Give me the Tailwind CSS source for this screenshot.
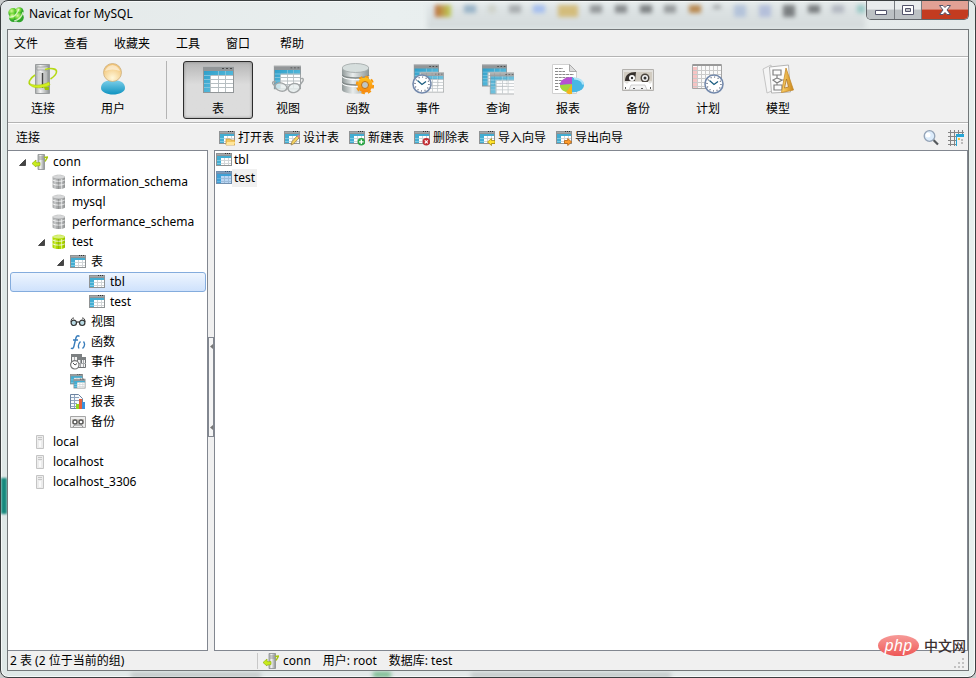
<!DOCTYPE html>
<html lang="zh-CN">
<head>
  <meta charset="UTF-8" />
  <meta name="viewport" content="width=device-width, initial-scale=1.0" />
  <title>Navicat for MySQL</title>
  <script src="https://cdn.jsdelivr.net/npm/@tailwindcss/browser@4"></script>
</head>
<body class="h-screen overflow-hidden bg-[#c9cccc] font-['Noto_Sans','Noto_Sans_CJK_SC',sans-serif] text-xs text-black">

  <!-- Icon definitions -->
  <svg width="0" height="0" class="absolute" aria-hidden="true">
    <defs>
      <linearGradient id="g-metal" x1="0" x2="1"><stop offset="0" stop-color="#a4a8a8" /><stop offset=".35" stop-color="#f4f4f4" /><stop offset="1" stop-color="#8b9090" /></linearGradient>
      <linearGradient id="g-drum" x1="0" x2="1"><stop offset="0" stop-color="#8f9898" /><stop offset=".4" stop-color="#e9eded" /><stop offset="1" stop-color="#8b9595" /></linearGradient>
      <linearGradient id="g-blue" x1="0" x2="1" y2="1"><stop offset="0" stop-color="#2f9fc9" /><stop offset="1" stop-color="#6cc9e6" /></linearGradient>
      <linearGradient id="g-body" x1="0" x2="0" y1="0" y2="1"><stop offset="0" stop-color="#7fd0ea" /><stop offset="1" stop-color="#0f93c0" /></linearGradient>
      <radialGradient id="g-head" cx=".5" cy=".8" r=".7"><stop offset="0" stop-color="#fff7da" /><stop offset="1" stop-color="#f2c578" /></radialGradient>
      <radialGradient id="g-ball" cx=".35" cy=".3"><stop offset="0" stop-color="#d8f79a" /><stop offset=".6" stop-color="#6fd636" /><stop offset="1" stop-color="#2fa62a" /></radialGradient>
      <linearGradient id="g-gold" x1="0" x2="1"><stop offset="0" stop-color="#ffd56b" /><stop offset="1" stop-color="#c9851a" /></linearGradient>
      <linearGradient id="g-gear" x1="0" x2="0" y1="0" y2="1"><stop offset="0" stop-color="#ffc21c" /><stop offset="1" stop-color="#f7850f" /></linearGradient>

      <symbol id="i-table" viewBox="0 0 16 16">
        <path d="M0 1h16v13H0z" fill="#8f9395" />
        <path d="M1 2h14v1H1z" fill="#a3a7a9" />
        <path d="M9 1h1v1H9zM11 1h1v1h-1zM13 1h1v1h-1z" fill="#333" />
        <path d="M1 4h14v2H1zM1 6h4v7H1z" fill="#43add2" />
        <path d="M1 8h4v1H1zM1 11h4v1H1z" fill="#7cc9e2" />
        <path d="M5 6h10v7H5z" fill="#fff" />
        <path d="M5 8h10v1H5zM5 11h10v1H5zM8 6h1v7H8zM12 6h1v7h-1z" fill="#d2d6d8" />
      </symbol>

      <symbol id="i-table-lg" viewBox="0 0 32 32">
        <path d="M1 3h31v27H1z" fill="#929698" />
        <path d="M1 3h31v1H1z" fill="#b5b8b9" />
        <path d="M20 5h2v1h-2zM24 5h2v1h-2zM28 5h2v1h-2z" fill="#4b4b4b" />
        <path d="M2 8h29v5H2zM2 13h7v16H2z" fill="url(#g-blue)" />
        <path d="M9 13h22v16H9z" fill="#fff" />
        <path d="M2 12h7v1H2zM2 16h7v1H2zM2 20h7v1H2zM2 24h7v1H2zM16 8h1v5h-1zM23 8h1v5h-1z" fill="#7fc2dc" />
        <path d="M9 12h22v1H9zM9 16h22v1H9zM9 20h22v1H9zM9 24h22v1H9zM8 13h1v16H8zM16 13h1v16h-1zM23 13h1v16h-1z" fill="#b7bfc2" />
      </symbol>

      <symbol id="i-server" viewBox="0 0 16 16">
        <path d="M6 .5h6.500v15H6z" fill="url(#g-metal)" stroke="#8c8f90" stroke-width=".8" />
        <path d="M7 3h4.500M7 5h4.500" stroke="#888" stroke-width=".8" />
        <path d="M12 3.500l3.500-.5-2.500 4.500" fill="none" stroke="#a7c510" stroke-width="1.500" />
        <path d="M0 9.500l4-3.500v2.500c2 .5 3 0 4 0v3c-2 .5-3 .5-4 .3V13z" fill="#c9ec1c" stroke="#94b30a" stroke-width=".7" />
      </symbol>

      <symbol id="i-server-off" viewBox="0 0 16 16">
        <path d="M4.500 1.500h7v13h-7z" fill="#ececec" stroke="#c4c4c4" />
        <path d="M6 3.500h4M6 5.500h4" stroke="#c6c6c6" />
        <path d="M8 7v6" stroke="#fafafa" stroke-width="2" />
      </symbol>

      <symbol id="i-db" viewBox="0 0 16 16">
        <path d="M1.500 2.500C4 .3 12 .3 14 2.500v11c-2 2-10 2-12.500 0z" fill="currentColor" />
        <ellipse cx="7.800" cy="2.800" rx="6" ry="1.700" fill="#fff" fill-opacity=".5" />
        <path d="M1.500 6c3 1.800 9.500 1.800 12.500 0M1.500 9.800c3 1.800 9.500 1.800 12.500 0" fill="none" stroke="#fff" stroke-opacity=".8" />
        <path d="M4 5v10M10.500 5v10" stroke="#fff" stroke-opacity=".5" />
        <path d="M7.500 5v10M13.200 4v10" stroke="#000" stroke-opacity=".15" stroke-width="1.500" />
      </symbol>

      <symbol id="i-arrow" viewBox="0 0 7 7"><path d="M6.500 .5v6h-6z" fill="#444" stroke="#222" stroke-width=".7" /></symbol>

      <symbol id="i-clock" viewBox="0 0 20 20">
        <circle cx="10" cy="10" r="9" fill="#fff" stroke="#7389ac" stroke-width="1.600" />
        <circle cx="10" cy="10" r="7" fill="none" stroke="#49536a" stroke-width="1.200" stroke-dasharray="1 2.660" />
        <path d="M5.500 6.500L10 10.500l4-3" fill="none" stroke="#1b5d80" stroke-width="1.300" />
      </symbol>

      <symbol id="i-cassette" viewBox="0 0 32 32">
        <path d="M.5 6.500h31v21H.5z" fill="#e3e1dd" stroke="#b3b1ae" />
        <path d="M2 9h28v9H2z" fill="#d2ccc1" />
        <path d="M3 18c0-6 4-9 11-9l-1 9z" fill="#37322e" />
        <circle cx="23" cy="15" r="4.500" fill="#4a443d" />
        <circle cx="10" cy="15" r="3" fill="#fff" /><circle cx="23" cy="15" r="3" fill="#f3f3f3" />
        <circle cx="10" cy="15" r="1.200" fill="#333" /><circle cx="23" cy="15" r="1.500" fill="#333" />
        <path d="M2 19l3 2 2-2h19l2 2 2-2v7H2z" fill="#fff" />
        <path d="M7 27l2-5h14l2 5z" fill="#f4f4f4" stroke="#bbb" stroke-width=".7" />
        <path d="M11 25h2v1h-2zM19 25h2v1h-2zM3 24h1v2H3zM28 24h1v2h-1z" fill="#555" />
      </symbol>
    </defs>
  </svg>

  <div class="relative flex h-full flex-col overflow-hidden rounded-lg border border-[#3b3f40] bg-linear-to-r from-[#dfe8e7] via-[#e3e9e9] to-[#e6efed] px-[6px] pb-[6px] shadow-[inset_0_0_0_1px_#ffffffb0]">

    <!-- Glass reflections showing through the frame -->
    <div class="pointer-events-none absolute inset-0 overflow-hidden" aria-hidden="true">
      <div class="absolute inset-x-0 top-px h-7 bg-linear-to-r from-[#e4e9e9] via-[#e9efef] via-40% to-[#e4eaea]"></div>
      <div class="absolute top-1 right-[110px] left-[426px] h-6 bg-linear-to-b from-[#dfe5e6] to-[#d3dadb] blur-[2px]"></div>
      <div class="absolute top-1 right-[110px] left-[434px] flex items-start justify-between blur-[2px]">
        <span class="h-3 w-4 bg-linear-to-r from-[#bb6a3c] to-[#b9cf57]"></span><span class="h-2 w-3 bg-[#9ab4c8]"></span><span class="h-2 w-2 bg-[#cfd3cb]"></span><span class="h-2 w-3 bg-[#a9aeb0]"></span><span class="h-2 w-3 bg-[#a6bfee]"></span><span class="h-3 w-5 bg-[#d3bc7c]"></span><span class="h-2 w-3 bg-[#95999b]"></span><span class="h-2 w-3 bg-[#8a8e90]"></span><span class="h-2 w-3 bg-[#7f8385]"></span><span class="h-2 w-3 bg-[#989c9e]"></span><span class="h-2 w-3 bg-[#b98a52]"></span><span class="h-1 w-2 bg-[#a5a9ab]"></span><span class="h-3 w-3 bg-[#b4c3da]"></span><span class="h-3 w-3 bg-[#b4bfda]"></span><span class="h-3 w-3 bg-[#7b7f81]"></span><span class="h-2 w-3 bg-[#7b7f81]"></span><span class="h-2 w-3 bg-[#b4b9c2]"></span><span class="h-2 w-2 bg-[#9ac9c6]"></span>
      </div>
      <div class="absolute top-[477px] left-0 h-9 w-[6px] bg-[#17897d] blur-[1px]"></div>
      <div class="absolute bottom-0 left-[372px] h-[5px] w-[18px] bg-[#6cb585] blur-[2px]"></div>
      <div class="absolute bottom-0 left-[130px] h-1 w-[130px] bg-[#b9c0c0] blur-[2px]"></div>
      <div class="absolute bottom-0 left-[470px] h-1 w-[200px] bg-[#b9c0c0] blur-[2px]"></div>
    </div>

    <header class="relative flex h-7 shrink-0 items-start">
      <svg class="mt-[6px] ml-px size-4" viewBox="0 0 16 16" aria-hidden="true">
        <circle cx="5" cy="5.800" r="4.700" fill="url(#g-ball)" /><circle cx="11.300" cy="4.500" r="4.300" fill="url(#g-ball)" /><circle cx="5.500" cy="10.500" r="4.500" fill="url(#g-ball)" /><circle cx="11" cy="10.500" r="4.800" fill="url(#g-ball)" />
        <path d="M1 10c5 1 8-3 10-8M6 14c5-1 8-5 9-9" fill="none" stroke="#f0fbe0" stroke-opacity=".8" stroke-width="1.200" />
      </svg>
      <h1 class="ml-[5px] pt-[3px] text-xs leading-5">Navicat for MySQL</h1>
      <div class="ml-auto flex h-[19px] overflow-hidden rounded-b-[5px] border border-t-0 border-[#62666a]">
        <button class="flex w-[28px] items-center justify-center border-r border-[#777b80] bg-linear-to-b from-[#e9eced] from-45% to-[#bcc1c4] to-50%" aria-label="最小化">
          <svg class="mt-1 h-[5px] w-3" viewBox="0 0 12 5"><path d="M.5.500h11v4H.5z" fill="#fff" stroke="#53546a" /></svg>
        </button>
        <button class="flex w-[27px] items-center justify-center border-r border-[#777b80] bg-linear-to-b from-[#e9eced] from-45% to-[#bcc1c4] to-50%" aria-label="最大化">
          <svg class="h-[10px] w-3" viewBox="0 0 12 10"><path d="M.5.500h11v9H.5z" fill="#fff" stroke="#53546a" /><path d="M3.500 3.500h5v3h-5z" fill="#c2c5c9" stroke="#53546a" /></svg>
        </button>
        <button class="flex w-[46px] items-center justify-center bg-linear-to-b from-[#e2a195] from-45% to-[#c33b20] to-50%" aria-label="关闭">
          <svg class="h-[10px] w-3" viewBox="0 0 12 10"><path d="M.5.500h3.500l2 2 2-2h3.500L8 5l3.500 4.500H8l-2-2-2 2H.5L4 5z" fill="#fff" stroke="#53546a" /></svg>
        </button>
      </div>
    </header>

    <div class="relative flex min-h-0 flex-1 flex-col border border-[#73787a] bg-[#f0f0f0]">
      <nav class="flex h-[27px] shrink-0 items-center gap-[26px] border-b border-[#b4b4b4] pt-[2px] pl-[6px]">
        <button>文件</button>
        <button>查看</button>
        <button>收藏夹</button>
        <button>工具</button>
        <button>窗口</button>
        <button class="pl-1">帮助</button>
      </nav>

      <!-- Main toolbar -->
      <div class="flex h-[66px] shrink-0 items-center border-t border-b border-t-white border-b-[#b4b4b4]">
        <button class="flex h-[58px] w-[70px] flex-col items-center gap-[5px] pt-[2px] leading-[18px]">
          <svg class="size-8" viewBox="0 0 32 32">
            <path d="M8.500 1.500h14v29h-14z" fill="url(#g-metal)" stroke="#9a9d9e" /><path d="M10 4h11v3H10z" fill="#ddd" stroke="#8b8e8f" stroke-width=".6" /><path d="M15.500 10v15" stroke="#444" stroke-width="1.500" /><path d="M13 9v17h6V9" fill="none" stroke="#c7c7c7" />
            <path d="M18 6.500c7-2 12-.5 11.500 2.500-.3 3-3 5-6 7M8 12c-6 4-7 8-4.500 10" fill="none" stroke="#b5d916" stroke-width="1.600" /><path d="M2 20c3 3 13 3 20-1l1 3c-5 3-19 5-21-2z" fill="#d3f01f" stroke="#a8cb0d" stroke-width=".6" /><path d="M17 24h5v3h-4z" fill="#9cc30b" />
          </svg>连接
        </button>
        <button class="flex h-[58px] w-[70px] flex-col items-center gap-[5px] pt-[2px] leading-[18px]">
          <svg class="size-8" viewBox="0 0 32 32"><path d="M4 25c0-6 6-8 12-8s12 2 12 8c0 4-6 6.500-12 6.500S4 29 4 25z" fill="url(#g-body)" /><circle cx="15.500" cy="9.500" r="9" fill="url(#g-head)" stroke="#cdae7c" stroke-width=".8" /><path d="M8 8c3-8 12-8 15 0-5-2-10-2-15 0z" fill="#fff" fill-opacity=".5" /></svg>用户
        </button>
        <div class="mr-4 ml-[18px] h-[58px] w-px bg-[#b4b4b4]"></div>
        <button class="flex h-[58px] w-[70px] flex-col items-center gap-[5px] rounded-[3px] border border-[#2c2c2c] bg-linear-to-b from-[#b5b5b5] to-[#dcdcdc] to-40% pt-px leading-[18px] shadow-[inset_0_0_3px_#8a8a8a]">
          <svg class="size-8"><use href="#i-table-lg" /></svg>表
        </button>
        <button class="flex h-[58px] w-[70px] flex-col items-center gap-[5px] pt-[2px] leading-[18px]">
          <svg class="size-8" viewBox="0 0 32 32"><use href="#i-table-lg" x="1" y="0" width="28" height="28" /><ellipse cx="9" cy="24" rx="6" ry="4" fill="#e6eeee" fill-opacity=".8" stroke="#a2a6a7" stroke-width="1.400" transform="rotate(15 9 24)" /><ellipse cx="22" cy="25" rx="6" ry="4.500" fill="#e6eeee" fill-opacity=".8" stroke="#a2a6a7" stroke-width="1.400" transform="rotate(-15 22 25)" /><path d="M3 23c-4-3-3-5 1-4M28 22l3-4c1-3-1-3-3-2" fill="none" stroke="#a2a6a7" stroke-width="1.400" /></svg>视图
        </button>
        <button class="flex h-[58px] w-[70px] flex-col items-center gap-[5px] pt-[2px] leading-[18px]">
          <svg class="size-8" viewBox="0 0 32 32"><path d="M0 5v22c2 5 24 5 27 0V5z" fill="url(#g-drum)" /><path d="M0 12c3 4 24 4 27 0M0 19c3 4 24 4 27 0" fill="none" stroke="#838a8a" stroke-width="1.300" /><path d="M0 13.500c3 4 24 4 27 0M0 20.500c3 4 24 4 27 0" fill="none" stroke="#fff" /><ellipse cx="13.500" cy="5" rx="13.300" ry="4.500" fill="#d6dedd" stroke="#9fa6a6" stroke-width=".8" /><circle cx="23" cy="22" r="8.200" fill="none" stroke="#f7980f" stroke-width="2" stroke-dasharray="3.500 2.940" /><circle cx="23" cy="22" r="7.500" fill="url(#g-gear)" /><circle cx="23" cy="22" r="3.500" fill="#bfc7c5" stroke="#c8700a" /></svg>函数
        </button>
        <button class="flex h-[58px] w-[70px] flex-col items-center gap-[5px] pt-[2px] leading-[18px]">
          <svg class="size-8" viewBox="0 0 32 32"><use href="#i-table-lg" x="1" y="-1" width="26" height="26" /><use href="#i-table-lg" x="8" y="6" width="24" height="26" opacity=".8" /><use href="#i-clock" x="0" y="11" width="20" height="20" /></svg>事件
        </button>
        <button class="flex h-[58px] w-[70px] flex-col items-center gap-[5px] pt-[2px] leading-[18px]">
          <svg class="size-8" viewBox="0 0 32 32"><use href="#i-table-lg" x="-1" y="-1" width="26" height="26" /><use href="#i-table-lg" x="7" y="7" width="26" height="26" opacity=".8" /></svg>查询
        </button>
        <button class="flex h-[58px] w-[70px] flex-col items-center gap-[5px] pt-[2px] leading-[18px]">
          <svg class="size-8" viewBox="0 0 32 32"><path d="M.5 1.500h17l7 7v22H.5z" fill="#fff" stroke="#d0d0d0" /><path d="M17.500 1.500v7h7z" fill="#ddd" stroke="#aaa" /><path d="M3 5.500h8M3 8.500h10M3 11.500h19M3 14.500h18M3 17.500h12M3 20.500h6M3 23.500h4M3 26.500h4" stroke="#8a8a8a" stroke-dasharray="3 .7" /><ellipse cx="20" cy="22" rx="12" ry="7.500" fill="#49b7e4" /><path d="M20 21V14c-7 0-12 3-12 8z" fill="#b84fd0" /><path d="M20 21L8 22c0 4 3 6 6 7z" fill="#a4d838" /><path d="M20 21l-6 8c2 3 4 2 6 2z" fill="#f5b51b" /><path d="M22 15.500c6 0 9 3 9 6" fill="none" stroke="#b3e5f8" stroke-width="2" /></svg>报表
        </button>
        <button class="flex h-[58px] w-[70px] flex-col items-center gap-[5px] pt-[2px] leading-[18px]">
          <svg class="size-8"><use href="#i-cassette" /></svg>备份
        </button>
        <button class="flex h-[58px] w-[70px] flex-col items-center gap-[5px] pt-[2px] leading-[18px]">
          <svg class="size-8" viewBox="0 0 32 32"><path d="M.5 1.500h29v24H.5z" fill="#fafafa" stroke="#a5a5a5" /><path d="M1 1h28v2H1z" fill="#999" /><path d="M1 4h4v21H1z" fill="#f6c3c3" /><path d="M1 7.500h28M1 11.500h28M1 15.500h28M1 19.500h28M1 23.500h28M5.500 3v22M9.500 3v22M13.500 3v22M17.500 3v22M21.500 3v22M25.500 3v22" stroke="#cacaca" /><use href="#i-clock" x="12" y="11" width="20" height="20" /></svg>计划
        </button>
        <button class="flex h-[58px] w-[70px] flex-col items-center gap-[5px] pt-[2px] leading-[18px]">
          <svg class="size-8" viewBox="0 0 32 32"><path d="M1 6l8-4 3 25-7 3z" fill="#f5f5f5" stroke="#c5c5c5" /><path d="M7.500 4l19-2 2 27-19 1z" fill="#fbfbfb" stroke="#b5b5b5" /><path d="M11 7h8v5h-8zM12 22h8v5h-8zM15 12v3l-4 2 4 3 5-3-5-2M15 20v2M20 17h5" fill="none" stroke="#808080" stroke-width="1.200" /><path d="M24 5l7.500 22-12 2.500z" fill="url(#g-gold)" stroke="#c58a2c" stroke-width=".8" /><path d="M24.500 16l2 8-4 1z" fill="#f3eadb" stroke="#a66f20" stroke-width=".7" /></svg>模型
        </button>
      </div>

      <!-- Object toolbar -->
      <div class="flex h-[27px] shrink-0 items-center border-t border-white pt-px pr-1">
        <h2 class="w-[211px] shrink-0 pl-2">连接</h2>
        <div class="flex flex-1 gap-[10px]">
          <button class="flex items-center gap-[3px]">
            <svg class="size-4" viewBox="0 0 16 16"><use href="#i-table" width="16" height="16" /><path d="M7 9h4l1 1h4v5H7z" fill="#f3c75f" stroke="#c5963a" stroke-width=".7" /><path d="M8 12h8l-1 3H7z" fill="#ffe69b" /></svg>打开表
          </button>
          <button class="flex items-center gap-[3px]">
            <svg class="size-4" viewBox="0 0 16 16"><use href="#i-table" width="16" height="16" /><path d="M7 15l1-3.500L13 6l2 2-5.500 6z" fill="#f5d25e" stroke="#8d7440" stroke-width=".7" /><path d="M13 6l1.200-1.200 1.800 1.800L15 8z" fill="#e5838a" /></svg>设计表
          </button>
          <button class="flex items-center gap-[3px]">
            <svg class="size-4" viewBox="0 0 16 16"><use href="#i-table" width="16" height="16" /><circle cx="12.300" cy="11.800" r="3.700" fill="#2aa645" /><path d="M12.300 9.500v4.600M10 11.800h4.600" stroke="#fff" stroke-width="1.300" /></svg>新建表
          </button>
          <button class="flex items-center gap-[3px]">
            <svg class="size-4" viewBox="0 0 16 16"><use href="#i-table" width="16" height="16" /><circle cx="12.300" cy="11.800" r="3.700" fill="#c22c32" /><path d="M10.800 10.300l3 3M13.800 10.300l-3 3" stroke="#fff" stroke-width="1.200" /></svg>删除表
          </button>
          <button class="flex items-center gap-[3px]">
            <svg class="size-4" viewBox="0 0 16 16"><use href="#i-table" width="16" height="16" /><path d="M8.500 12l4-3.500v2H16v3h-3.500v2z" fill="#ffe32c" stroke="#a68a10" stroke-width=".8" /></svg>导入向导
          </button>
          <button class="flex items-center gap-[3px]">
            <svg class="size-4" viewBox="0 0 16 16"><use href="#i-table" width="16" height="16" /><path d="M15.700 12l-4-3.500v2H8.500v3h3.200v2z" fill="#ff9c2a" stroke="#b3600c" stroke-width=".8" /></svg>导出向导
          </button>
        </div>
        <button class="mr-[9px]" aria-label="搜索">
          <svg class="size-4" viewBox="0 0 16 16"><path d="M10.500 10l4.500 4.500" stroke="#55595c" stroke-width="2.200" /><circle cx="6.500" cy="6" r="5.300" fill="#dcecfb" stroke="#94a3b6" stroke-width="1.300" /><circle cx="5" cy="5" r="2.500" fill="#fff" /></svg>
        </button>
        <button aria-label="布局">
          <svg class="size-4" viewBox="0 0 16 16"><path d="M0 2.500h16M0 6.500h16M0 10.500h8M0 14.500h8M2.500 0v16M6.500 0v16M10.500 0v5M14.500 0v5" stroke="#858585" /><path d="M8 5h8v11H8z" fill="#f0f0f0" /><path d="M8 4h8v3H8zM8 4h1v12H8z" fill="#24a6d6" /><path d="M10 8h2v2h-2z" fill="#f0c23d" /><path d="M13 9h2v2h-2zM13 12h2v2h-2z" fill="#bbb" /></svg>
        </button>
      </div>

      <div class="flex min-h-0 flex-1">
        <!-- Connection tree -->
        <aside class="w-[200px] shrink-0 border border-l-0 border-[#828790] bg-white pt-px pr-px pl-[2px]">
          <ul>
            <li class="flex h-5 items-center gap-[6px] pl-[9px]"><svg class="size-[7px]"><use href="#i-arrow" /></svg><svg class="-mr-px size-4"><use href="#i-server" /></svg>conn</li>
            <li class="flex h-5 items-center gap-[5px] pl-[41px]"><svg class="size-4 text-[#adafb0]"><use href="#i-db" /></svg>information_schema</li>
            <li class="flex h-5 items-center gap-[5px] pl-[41px]"><svg class="size-4 text-[#adafb0]"><use href="#i-db" /></svg>mysql</li>
            <li class="flex h-5 items-center gap-[5px] pl-[41px]"><svg class="size-4 text-[#adafb0]"><use href="#i-db" /></svg>performance_schema</li>
            <li class="flex h-5 items-center gap-[6px] pl-7"><svg class="size-[7px]"><use href="#i-arrow" /></svg><svg class="-mr-px size-4 text-[#b0dc00]"><use href="#i-db" /></svg>test</li>
            <li class="flex h-5 items-center gap-[6px] pl-[47px]"><svg class="size-[7px]"><use href="#i-arrow" /></svg><svg class="-mr-px size-4"><use href="#i-table" /></svg>表</li>
            <li class="flex h-5 items-center gap-[5px] rounded-[3px] border border-[#84acdd] bg-linear-to-b from-[#eef5fe] to-[#cfe2fc] pl-[78px]"><svg class="size-4"><use href="#i-table" /></svg>tbl</li>
            <li class="flex h-5 items-center gap-[5px] pl-[79px]"><svg class="size-4"><use href="#i-table" /></svg>test</li>
            <li class="flex h-5 items-center gap-[5px] pl-[60px]">
              <svg class="size-4" viewBox="0 0 16 16"><path d="M1 8c0-3 1-4 3-4M15 8c0-3-1-4-3-4" fill="none" stroke="#444" /><circle cx="3.800" cy="8.800" r="2.700" fill="#b9dbe5" stroke="#333" stroke-width="1.200" /><circle cx="12.200" cy="8.800" r="2.700" fill="#b9dbe5" stroke="#333" stroke-width="1.200" /><path d="M6.500 8h3" stroke="#333" stroke-width="1.200" /></svg>视图
            </li>
            <li class="flex h-5 items-center gap-[5px] pl-[60px]">
              <svg class="size-4" viewBox="0 0 16 16" fill="none" stroke="#397dbb"><path d="M9.500 2.500c-2-2-3.500 0-4 3L4 12c-.5 2.500-2 3-3 2M3 6h5" stroke-width="1.400" /><path d="M10.500 7.500c-2 2-2.500 5-1.500 7M13.500 7.500c1.500 2 1 5-1 7" stroke-width="1.300" /></svg>函数
            </li>
            <li class="flex h-5 items-center gap-[5px] pl-[60px]">
              <svg class="size-4" viewBox="0 0 16 16"><path d="M1.500.500h10v9h-10zM7.500 3.500h8v10h-8z" fill="#f3f3f3" stroke="#707476" /><path d="M1 0h11v3H1zM7 3h9v3H7z" fill="#7c8082" /><path d="M4.500 3v4M10.500 6v7M13.500 6v7M8 9.500h8" stroke="#a5a8aa" /><circle cx="4.800" cy="10.800" r="4.200" fill="#fff" stroke="#777" stroke-width="1.200" /><path d="M3 9l2 2 2-1.500" fill="none" stroke="#555" /></svg>事件
            </li>
            <li class="flex h-5 items-center gap-[5px] pl-[60px]">
              <svg class="size-4" viewBox="0 0 16 16"><use href="#i-table" y="-1" width="13" height="13" /><use href="#i-table" x="3" y="4" width="13" height="12" /></svg>查询
            </li>
            <li class="flex h-5 items-center gap-[5px] pl-[60px]">
              <svg class="size-4" viewBox="0 0 16 16"><path d="M.5.500h8l4 4v10H.5z" fill="#f5f9fd" stroke="#6c83a0" /><path d="M1 3.500h8M1 6.500h11M1 9.500h6M1 12.500h5M4.500 1v13" stroke="#8fa3bd" /><path d="M6 10h3v5H6z" fill="#92d51e" /><path d="M9 5h3v10H9z" fill="#e8603b" /><path d="M12 8h3v7h-3z" fill="#3b91dc" /></svg>报表
            </li>
            <li class="flex h-5 items-center gap-[5px] pl-[60px]">
              <svg class="size-4" viewBox="0 0 16 16"><path d="M.5 2.500h15v11H.5z" fill="#eee" stroke="#a5a5a5" /><path d="M2 5h12v5H2z" fill="#cdc9c2" /><circle cx="5" cy="8" r="2" fill="#fff" stroke="#555" stroke-width="1.300" /><circle cx="11" cy="8" r="2" fill="#fff" stroke="#555" stroke-width="1.300" /><path d="M3 13l1.500-2h7l1.500 2" fill="none" stroke="#888" /></svg>备份
            </li>
            <li class="flex h-5 items-center gap-[5px] pl-[22px]"><svg class="size-4"><use href="#i-server-off" /></svg>local</li>
            <li class="flex h-5 items-center gap-[5px] pl-[22px]"><svg class="size-4"><use href="#i-server-off" /></svg>localhost</li>
            <li class="flex h-5 items-center gap-[5px] pl-[22px]"><svg class="size-4"><use href="#i-server-off" /></svg>localhost_3306</li>
          </ul>
        </aside>

        <!-- Splitter -->
        <div class="flex w-[6px] shrink-0 flex-col pt-[187px]">
          <button class="flex h-[100px] flex-col items-center justify-between border border-[#828790] bg-[#f5f5f5] py-[6px]" aria-label="折叠">
            <svg class="h-[5px] w-[3px]" viewBox="0 0 3 5"><path d="M3 0v5L0 2.500z" fill="#777" /></svg>
            <svg class="h-[5px] w-[3px]" viewBox="0 0 3 5"><path d="M3 0v5L0 2.500z" fill="#777" /></svg>
          </button>
        </div>

        <!-- Table list -->
        <main class="min-w-0 flex-1 border border-[#828790] bg-white pl-px">
          <ul>
            <li class="flex h-[18px] items-center"><svg class="size-4"><use href="#i-table" /></svg><span class="px-[2px] leading-[18px]">tbl</span></li>
            <li class="flex h-[18px] items-center"><svg class="size-4" viewBox="0 0 16 16"><use href="#i-table" width="16" height="16" /><path d="M0 1h16v13H0z" fill="#3d8be0" fill-opacity=".35" /></svg><span class="bg-[#f0f0f0] px-[2px] leading-[18px]">test</span></li>
          </ul>
        </main>
      </div>

      <footer class="flex h-[19px] shrink-0 items-center pt-px pr-1 pl-[2px]">
        <p class="w-[247px]">2 表 (2 位于当前的组)</p>
        <div class="flex h-4 items-center gap-3 border-l border-[#c8c8c8] pl-[5px]">
          <span class="flex items-center gap-1"><svg class="size-4"><use href="#i-server" /></svg>conn</span>
          <span>用户: root</span>
          <span>数据库: test</span>
        </div>
        <svg class="mt-1 ml-auto size-[10px]" viewBox="0 0 10 10"><path d="M8 0h2v2H8zM8 4h2v2H8zM8 8h2v2H8zM4 4h2v2H4zM4 8h2v2H4zM0 8h2v2H0z" fill="#c2c2c2" /></svg>
      </footer>
    </div>

    <!-- Watermark -->
    <div class="absolute right-[9px] bottom-[21px] flex items-center gap-[5px]">
      <span class="flex h-[21px] w-[41px] items-center justify-center rounded-[50%] bg-linear-to-b from-[#f69a98] to-[#ee5757] pb-[2px] text-base leading-none text-white italic">php</span>
      <span class="text-[14px] leading-5 font-medium text-[#3c3030]">中文网</span>
    </div>
  </div>
</body>
</html>
